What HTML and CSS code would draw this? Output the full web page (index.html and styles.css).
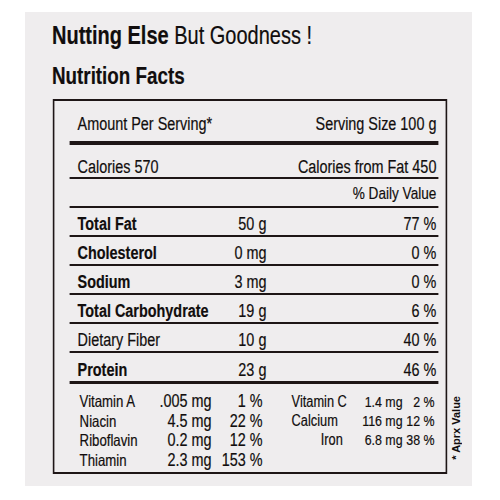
FILE: index.html
```html
<!DOCTYPE html>
<html lang="en">

<head>
    <meta charset="UTF-8">
    <meta name="viewport" content="width=device-width, initial-scale=1.0">
    <title>Nutrition Facts</title>
    <link rel="stylesheet" href="styles.css">
</head>

<body>

    <div class="panel">
        <!-- the label is set in Liberation Sans and squeezed to look like a narrow face -->
        <div class="label">
            <h1 class="tagline"><strong>Nutting Else</strong> But Goodness !</h1>
            <h2 class="title">Nutrition Facts</h2>

            <div class="facts">
                <div class="row row-head">
                    <span>Amount Per Serving*</span>
                    <span class="right">Serving Size 100 g</span>
                </div>
                <div class="row row-cal">
                    <span>Calories 570</span>
                    <span class="right">Calories from Fat 450</span>
                </div>
                <div class="row row-dv">
                    <span class="right">% Daily Value</span>
                </div>

                <!-- main nutrients -->
                <div class="row nutrient">
                    <span class="name bold">Total Fat</span>
                    <span class="amount">50 g</span>
                    <span class="pct">77 %</span>
                </div>
                <div class="row nutrient">
                    <span class="name bold">Cholesterol</span>
                    <span class="amount">0 mg</span>
                    <span class="pct">0 %</span>
                </div>
                <div class="row nutrient">
                    <span class="name bold">Sodium</span>
                    <span class="amount">3 mg</span>
                    <span class="pct">0 %</span>
                </div>
                <div class="row nutrient">
                    <span class="name bold">Total Carbohydrate</span>
                    <span class="amount">19 g</span>
                    <span class="pct">6 %</span>
                </div>
                <div class="row nutrient">
                    <span class="name">Dietary Fiber</span>
                    <span class="amount">10 g</span>
                    <span class="pct">40 %</span>
                </div>
                <div class="row nutrient last">
                    <span class="name bold">Protein</span>
                    <span class="amount">23 g</span>
                    <span class="pct">46 %</span>
                </div>

                <!-- vitamins and minerals -->
                <div class="micro">
                    <div class="micro-left">
                        <span>Vitamin A</span><span class="num">.005 mg</span><span class="num">1 %</span>
                        <span>Niacin</span><span class="num">4.5 mg</span><span class="num">22 %</span>
                        <span>Riboflavin</span><span class="num">0.2 mg</span><span class="num">12 %</span>
                        <span>Thiamin</span><span class="num">2.3 mg</span><span class="num">153 %</span>
                    </div>
                    <div class="micro-right">
                        <span>Vitamin C</span><span class="num">1.4 mg</span><span class="num">2 %</span>
                        <span>Calcium</span><span class="num">116 mg</span><span class="num">12 %</span>
                        <span class="iron">Iron</span><span class="num">6.8 mg</span><span class="num">38 %</span>
                    </div>
                </div>
            </div>
        </div>
        <div class="note">* Aprx Value</div>
    </div>

</body>

</html>
```

FILE: styles.css
```css
body {
    margin: 0;
    background-color: #ffffff;
    font-family: "Liberation Sans", Arial, sans-serif;
    color: #110d0d;
}

.panel {
    display: flex;
    background-color: #efedee;
    margin: 12px 28px 14px 25px;
    padding: 9px 0 12px 27px;
}

/* widths below are before the 0.8 squeeze */
.label {
    width: 494px;
    flex-shrink: 0;
    transform: scaleX(0.8);
    transform-origin: 0 0;
    margin-right: -99px;
    -webkit-text-stroke: 0.2px #110d0d;
}

.tagline {
    margin: 0;
    font-size: 25px;
    line-height: 28px;
    font-weight: normal;
}

.title {
    margin: 14px 0 10px 0;
    font-size: 23.5px;
    line-height: 26px;
    font-weight: bold;
}

.facts {
    box-sizing: border-box;
    width: 492.5px;
    margin-left: 1.25px;
    border: 2px solid #1e1616;
    border-left-width: 2.5px;
    border-right-width: 2.5px;
    padding: 0 8.75px 0 18.75px;
}

.row {
    display: flex;
    align-items: flex-end;
    border-bottom: 2px solid #1e1616;
    padding: 0 2.5px 1px 10px;
    font-size: 18px;
    line-height: 20px;
}

.row .right {
    margin-left: auto;
}

.row-head {
    height: 33px;
    padding-bottom: 7px;
    border-bottom-width: 4px;
}

.row-cal {
    height: 32px;
    padding-bottom: 0;
}

.row-dv {
    height: 25px;
    padding-bottom: 2px;
    font-size: 17px;
}

.nutrient {
    height: 26px;
}

.nutrient.last {
    height: 27px;
    border-bottom-width: 3px;
}

.nutrient .name {
    width: 176px;
    white-space: nowrap;
}

.nutrient .amount {
    width: 60px;
    text-align: right;
}

.nutrient .pct {
    margin-left: auto;
}

.bold {
    font-weight: bold;
}

.micro {
    display: flex;
    padding: 8px 0 2px 12.5px;
}

.micro-left {
    display: grid;
    grid-template-columns: 85px 80px 63.75px;
    align-items: baseline;
    font-size: 16.5px;
    line-height: 19.6px;
}

.micro-left .num {
    font-size: 18px;
}

.micro-right {
    display: grid;
    grid-template-columns: 80px 58.75px 40px;
    align-items: baseline;
    align-content: start;
    margin-left: 36.25px;
    font-size: 16px;
    line-height: 19px;
}

.micro-right .num {
    font-size: 15.5px;
}

.num {
    text-align: right;
    white-space: nowrap;
}

.micro-right .iron {
    text-align: right;
    padding-right: 16px;
}

.note {
    writing-mode: vertical-rl;
    transform: rotate(180deg);
    align-self: flex-end;
    margin: 0 0 15px 5px;
    font-size: 11px;
    font-weight: bold;
    line-height: 9px;
    white-space: nowrap;
}
```
